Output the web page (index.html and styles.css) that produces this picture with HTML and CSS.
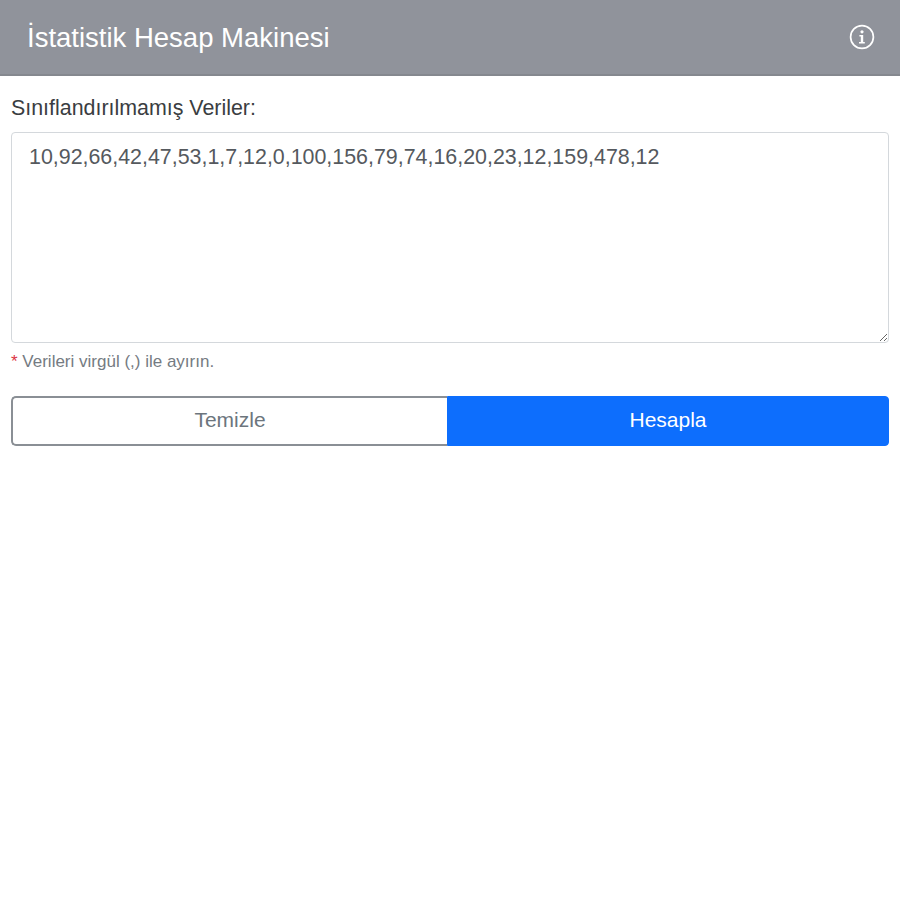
FILE: index.html
```html
<!DOCTYPE html>
<html lang="tr">
<head>
<meta charset="utf-8">
<title>İstatistik Hesap Makinesi</title>
<link rel="stylesheet" href="styles.css">
</head>
<body>
<header class="topbar">
  <h1 class="title">İstatistik Hesap Makinesi</h1>
  <svg class="info" viewBox="0 0 26 26" width="26" height="26" aria-hidden="true">
    <circle cx="13" cy="13" r="11.4" fill="none" stroke="currentColor" stroke-width="1.7"/>
    <circle cx="13" cy="7.8" r="1.6" fill="currentColor"/>
    <path d="M10.4 11h3.8v6.9h1.6v1.6H10v-1.6h1.8v-5.3h-1.4z" fill="currentColor"/>
  </svg>
</header>
<main class="content">
  <label class="label" for="data">Sınıflandırılmamış Veriler:</label>
  <textarea class="data" id="data">10,92,66,42,47,53,1,7,12,0,100,156,79,74,16,20,23,12,159,478,12</textarea>
  <p class="hint"><span class="star">*</span> Verileri virgül (,) ile ayırın.</p>
  <div class="actions">
    <button class="btn clear" type="button">Temizle</button>
    <button class="btn calc" type="button">Hesapla</button>
  </div>
</main>
</body>
</html>
```
FILE: styles.css
```css
* { box-sizing: border-box; }
html, body { margin: 0; padding: 0; background: #fff; }
body { font-family: "Liberation Sans", Arial, sans-serif; color: #212529; }
.topbar {
  height: 76px;
  background: #90939b;
  border-bottom: 2px solid #85888f;
  display: flex;
  align-items: center;
  justify-content: space-between;
  padding: 0 25px 0 27px;
  color: #fff;
}
.title { margin: 2px 0 0; font-size: 27.5px; font-weight: 400; line-height: 1; }
.info { display: block; }
.content { padding: 20px 11px 0 11px; }
.label { display: block; font-size: 21.4px; line-height: 24px; color: #3a3d41; }
.data {
  display: block;
  width: 100%;
  height: 211px;
  margin-top: 12px;
  padding: 12px 17px;
  border: 1px solid #d4d8dc;
  border-radius: 4px;
  font-family: inherit;
  font-size: 21.4px;
  line-height: 24px;
  color: #55595e;
  outline: 0;
}
.hint { margin: 9px 0 0; font-size: 17px; line-height: 20px; color: #757b82; }
.star { color: #dc3545; }
.actions { display: flex; margin-top: 24px; }
.btn {
  height: 50px;
  font-family: inherit;
  font-size: 21px;
  padding: 0 0 2px;
}
.clear {
  flex: 436 1 0;
  background: #fff;
  color: #6c757d;
  border: 2px solid #8a8f95;
  border-right: 0;
  border-radius: 5px 0 0 5px;
}
.calc {
  flex: 442 1 0;
  background: #0d6efd;
  color: #fff;
  border: 1px solid #0d6efd;
  border-radius: 0 4px 4px 0;
}
```
